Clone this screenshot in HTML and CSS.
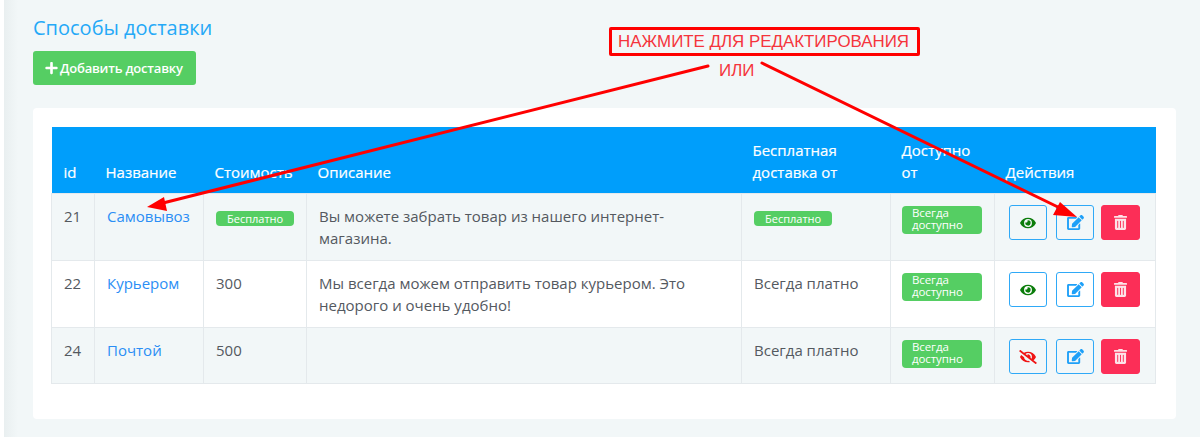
FILE: index.html
```html
<!DOCTYPE html>
<html lang="ru">
<head>
<meta charset="utf-8">
<title>Способы доставки</title>
<link rel="stylesheet" href="styles.css">
</head>
<body>
<svg class="defs" width="0" height="0" aria-hidden="true">
  <symbol id="i-eye" viewBox="0 0 576 512"><path d="M572.52 241.4C518.29 135.59 410.93 64 288 64S57.68 135.64 3.48 241.41a32.35 32.35 0 0 0 0 29.19C57.71 376.41 165.07 448 288 448s230.32-71.64 284.52-177.41a32.35 32.35 0 0 0 0-29.19zM288 400a144 144 0 1 1 144-144 143.93 143.93 0 0 1-144 144zm0-240a95.31 95.31 0 0 0-25.31 3.79 47.85 47.85 0 0 1-66.9 66.9A95.78 95.78 0 1 0 288 160z"/></symbol>
  <symbol id="i-slash" viewBox="0 0 640 512"><path d="M320 400c-75.85 0-137.25-58.71-142.9-133.11L72.2 185.82c-13.79 17.3-26.48 35.59-36.72 55.59a32.35 32.35 0 0 0 0 29.19C89.71 376.41 197.07 448 320 448c26.91 0 52.87-4 77.89-10.46L346 397.39a144.13 144.13 0 0 1-26 2.61zm313.82 58.1l-110.55-85.44a331.25 331.25 0 0 0 81.25-102.07 32.35 32.35 0 0 0 0-29.19C550.29 135.59 442.93 64 320 64a308.15 308.15 0 0 0-147.32 37.7L45.46 3.37A16 16 0 0 0 23 6.18L3.37 31.45A16 16 0 0 0 6.18 53.9l588.36 454.73a16 16 0 0 0 22.46-2.81l19.64-25.27a16 16 0 0 0-2.82-22.45zm-183.72-142l-39.3-30.38A94.75 94.75 0 0 0 416 256a94.76 94.76 0 0 0-121.31-92.21A47.65 47.65 0 0 1 304 192a46.64 46.64 0 0 1-1.54 10l-73.61-56.89A142.31 142.31 0 0 1 320 112a143.92 143.92 0 0 1 144 144c0 21.63-5.29 41.79-13.9 60.11z"/></symbol>
  <symbol id="i-edit" viewBox="0 0 576 512"><path d="M402.6 83.2l90.2 90.2c3.8 3.8 3.8 10 0 13.8L274.4 405.6l-92.8 10.3c-12.4 1.4-22.9-9.1-21.5-21.5l10.3-92.8L388.8 83.2c3.8-3.8 10-3.8 13.8 0zm162-22.9l-48.8-48.8c-15.2-15.2-39.9-15.2-55.2 0l-35.4 35.4c-3.8 3.8-3.8 10 0 13.8l90.2 90.2c3.8 3.8 10 3.8 13.8 0l35.4-35.4c15.2-15.3 15.2-40 0-55.2zM384 346.2V448H64V128h229.8c3.2 0 6.2-1.3 8.5-3.5l40-40c7.6-7.6 2.2-20.5-8.5-20.5H48C21.5 64 0 85.5 0 112v352c0 26.5 21.5 48 48 48h352c26.5 0 48-21.5 48-48V306.2c0-10.7-12.9-16-20.5-8.5l-40 40c-2.2 2.3-3.5 5.3-3.5 8.5z"/></symbol>
  <symbol id="i-trash" viewBox="0 0 448 512"><path d="M32 464a48 48 0 0 0 48 48h288a48 48 0 0 0 48-48V128H32zm272-256a16 16 0 0 1 32 0v224a16 16 0 0 1-32 0zm-96 0a16 16 0 0 1 32 0v224a16 16 0 0 1-32 0zm-96 0a16 16 0 0 1 32 0v224a16 16 0 0 1-32 0zM432 32H312l-9.4-18.7A24 24 0 0 0 281.1 0H166.8a23.72 23.72 0 0 0-21.4 13.3L136 32H16A16 16 0 0 0 0 48v32a16 16 0 0 0 16 16h416a16 16 0 0 0 16-16V48a16 16 0 0 0-16-16z"/></symbol>
  <symbol id="i-plus" viewBox="0 0 448 512"><path d="M416 208H272V64c0-17.67-14.33-32-32-32h-32c-17.67 0-32 14.33-32 32v144H32c-17.67 0-32 14.33-32 32v32c0 17.67 14.33 32 32 32h144v144c0 17.67 14.33 32 32 32h32c17.67 0 32-14.33 32-32V304h144c17.67 0 32-14.33 32-32v-32c0-17.67-14.33-32-32-32z"/></symbol>
</svg>
<main class="page">
  <h1 class="title">Способы доставки</h1>
  <button class="add-btn"><svg class="add-icon"><use href="#i-plus"/></svg>Добавить доставку</button>
  <section class="card">
    <table class="grid">
      <colgroup>
        <col class="c-id"><col class="c-name"><col class="c-cost"><col class="c-desc"><col class="c-free"><col class="c-avail"><col class="c-act">
      </colgroup>
      <thead>
        <tr><th>id</th><th>Название</th><th>Стоимость</th><th>Описание</th><th>Бесплатная доставка от</th><th>Доступно от</th><th>Действия</th></tr>
      </thead>
      <tbody>
        <tr class="row-tall">
          <td>21</td><td><a class="link" href="#">Самовывоз</a></td>
          <td><span class="badge">Бесплатно</span></td>
          <td>Вы можете забрать товар из нашего интернет-магазина.</td>
          <td><span class="badge">Бесплатно</span></td>
          <td><span class="badge badge-wide">Всегда доступно</span></td>
          <td class="acts"><div class="act-row"><button class="ic-btn"><svg class="ic-eye"><use href="#i-eye"/></svg></button><button class="ic-btn"><svg class="ic-edit"><use href="#i-edit"/></svg></button><button class="ic-btn ic-del"><svg class="ic-trash"><use href="#i-trash"/></svg></button></div></td>
        </tr>
        <tr class="row-tall">
          <td>22</td><td><a class="link" href="#">Курьером</a></td>
          <td>300</td>
          <td>Мы всегда можем отправить товар курьером. Это недорого и очень удобно!</td>
          <td>Всегда платно</td>
          <td><span class="badge badge-wide">Всегда доступно</span></td>
          <td class="acts"><div class="act-row"><button class="ic-btn"><svg class="ic-eye"><use href="#i-eye"/></svg></button><button class="ic-btn"><svg class="ic-edit"><use href="#i-edit"/></svg></button><button class="ic-btn ic-del"><svg class="ic-trash"><use href="#i-trash"/></svg></button></div></td>
        </tr>
        <tr class="row-short">
          <td>24</td><td><a class="link" href="#">Почтой</a></td>
          <td>500</td>
          <td></td>
          <td>Всегда платно</td>
          <td><span class="badge badge-wide">Всегда доступно</span></td>
          <td class="acts"><div class="act-row"><button class="ic-btn"><svg class="ic-slash"><use href="#i-slash"/></svg></button><button class="ic-btn"><svg class="ic-edit"><use href="#i-edit"/></svg></button><button class="ic-btn ic-del"><svg class="ic-trash"><use href="#i-trash"/></svg></button></div></td>
        </tr>
      </tbody>
    </table>
  </section>
  <div class="note note-box">НАЖМИТЕ ДЛЯ РЕДАКТИРОВАНИЯ</div>
  <div class="note note-or">ИЛИ</div>
  <svg class="arrows" width="1200" height="437" viewBox="0 0 1200 437">
    <line x1="708" y1="66" x2="155" y2="205"/>
    <polygon points="147,207 164,197 167,211"/>
    <line x1="762" y1="63" x2="1062" y2="209"/>
    <polygon points="1077,217 1060,202 1053,215"/>
  </svg>
</main>
</body>
</html>
```
FILE: styles.css
```css
html, body { margin: 0; padding: 0; background: #fff; }
body { height: 437px; overflow: hidden; font-family: "Open Sans", sans-serif; color: #54595f; }
.defs { position: absolute; }
.page {
  margin-left: 4px;
  height: 437px;
  box-sizing: border-box;
  padding: 15px 24px 0 29px;
  background: linear-gradient(90deg, #e9eff0 0, #f2f7f8 14px);
}
.title { margin: 0 0 11px; font-size: 20px; line-height: 25px; font-weight: 400; color: #25a9f7; }
.add-btn {
  display: flex; align-items: center;
  width: 163px; height: 34px; padding: 0 0 0 12px;
  border: 0; border-radius: 3px;
  background: #55ce63; color: #fff;
  font: 600 13px "Open Sans", sans-serif;
  letter-spacing: -.2px;
}
.add-icon { width: 13px; height: 14px; margin-right: 2px; fill: #fff; }
.card {
  margin-top: 23px; padding: 19px 20px 35px 18px;
  width: 1143px; box-sizing: border-box;
  background: #fff; border-radius: 4px;
}
.grid { width: 1104px; border-collapse: collapse; table-layout: fixed; font-size: 15px; line-height: 22px; }
.c-id { width: 43px; } .c-name { width: 109px; } .c-cost { width: 103px; } .c-desc { width: 435px; }
.c-free { width: 149px; } .c-avail { width: 104px; } .c-act { width: 161px; }
.grid th {
  background: #009efb; color: #fff; font-weight: 400; text-align: left;
  -webkit-text-stroke: .2px #fff;
  vertical-align: bottom; padding: 11px 11px 10px; height: 45px; white-space: normal;
}
.grid th:first-child { padding-left: 12px; }
.grid th:nth-child(3) { white-space: nowrap; overflow: hidden; }
.grid td { border: 1px solid #e4e9ec; padding: 11px 10px 10px 12px; vertical-align: top; }
.grid tbody tr:nth-child(odd) { background: #f2f7f8; }
.row-tall { height: 67px; }
.row-short { height: 56px; }
.link { color: #2b8ef5; text-decoration: none; }
.badge {
  display: inline-block; box-sizing: border-box;
  padding: 0 11px; border-radius: 4px;
  background: #55ce63; color: #fff;
  font-size: 11px; line-height: 15px; vertical-align: -1px;
}
.badge-wide { display: block; width: 80px; padding: 1px 10px; line-height: 12px; font-size: 11.5px; height: 28px; overflow: hidden; margin: 1px 0 0 -1px; letter-spacing: -.1px; }
.grid td.acts { padding: 11px 14px 9px; }
.act-row { display: flex; gap: 9px; }
.act-row .ic-del { margin-left: -2px; }
.ic-btn {
  display: flex; align-items: center; justify-content: center;
  width: 38px; height: 35px; padding: 0;
  background: transparent; border: 1px solid #2fa9f7; border-radius: 3px;
}
.ic-del { width: 39px; background: #fc2e57; border-color: #fc2e57; }
.ic-eye { width: 16px; height: 14px; fill: #0b7d0b; }
.ic-slash { width: 18px; height: 14px; fill: #f01414; }
.ic-edit { width: 17px; height: 15px; fill: #1ea0f8; }
.ic-trash { width: 13px; height: 15px; fill: #fde3e8; }
.note { position: absolute; color: #f5343c; font-family: "Liberation Sans", sans-serif; font-size: 16.9px; line-height: 20px; white-space: nowrap; }
.note-box { left: 609px; top: 27px; width: 311px; height: 29px; box-sizing: border-box; border: 3px solid #f00; border-radius: 2px; padding: 2px 0 0 6px; }
.note-or { left: 719px; top: 61px; }
.arrows { position: absolute; left: 0; top: 0; pointer-events: none; }
.arrows line { stroke: #f00; stroke-width: 3; stroke-linecap: round; }
.arrows polygon { fill: #f00; }
```
